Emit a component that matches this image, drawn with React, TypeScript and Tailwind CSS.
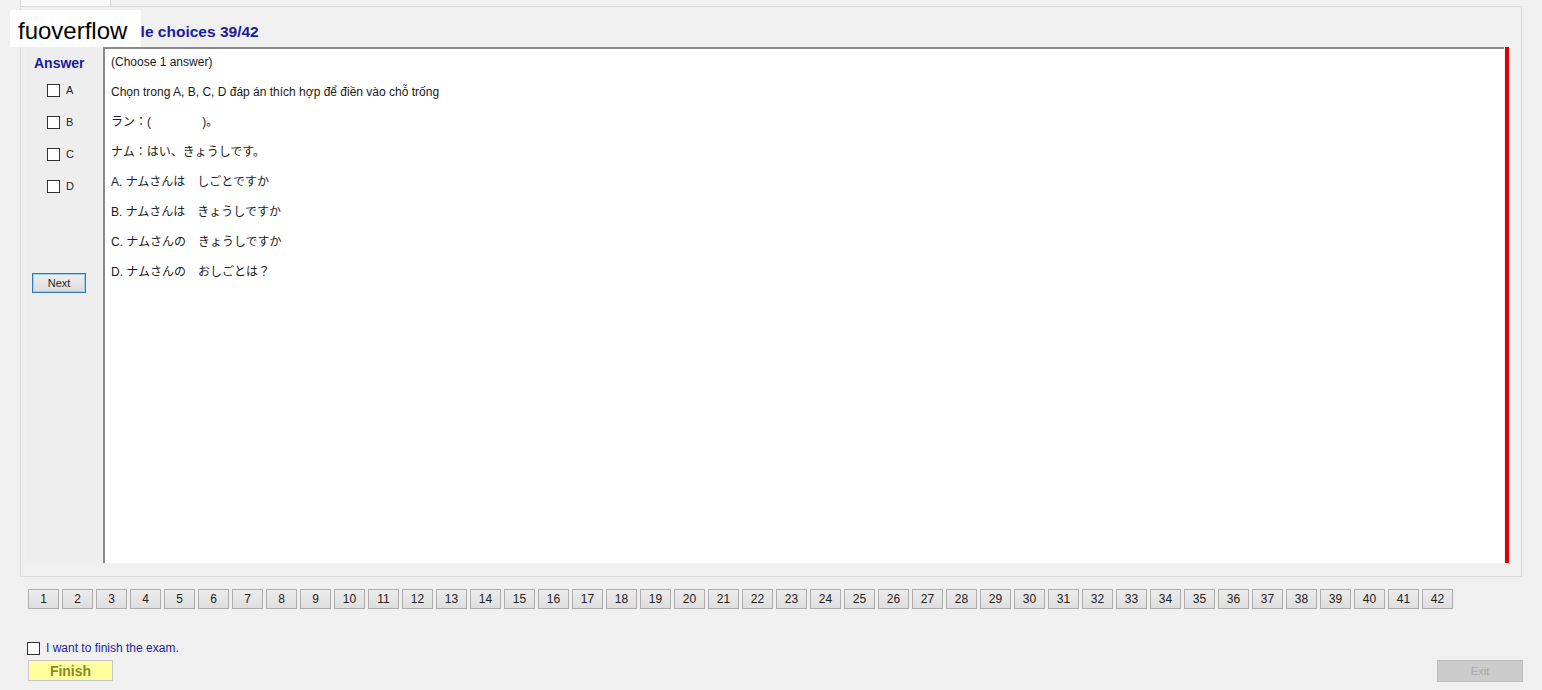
import React from "react";

const nums = Array.from({ length: 42 }, (_, i) => i + 1);

function Box() {
  return <span className="inline-block w-[13px] h-[13px] bg-white border border-[#333333]" />;
}

export default function App() {
  const lines = [
    "(Choose 1 answer)",
    "Chọn trong A, B, C, D đáp án thích hợp để điền vào chỗ trống",
    "ラン：(　　　　 )。",
    "ナム：はい、きょうしです。",
    "A. ナムさんは　しごとですか",
    "B. ナムさんは　きょうしですか",
    "C. ナムさんの　きょうしですか",
    "D. ナムさんの　おしごとは？",
  ];
  return (
    <div
      className="relative w-[1542px] h-[690px] bg-[#f0f0f0] overflow-hidden text-black"
      style={{ fontFamily: '"Liberation Sans", Arial, "Noto Sans CJK JP", sans-serif' }}
    >
      {/* tab strip */}
      <div className="h-[6px] flex">
        <div className="ml-[20px] w-[91px] h-[6px] bg-[#fafafa] border-l border-r border-[#d9d9d9]" />
      </div>
      {/* panel */}
      <div className="ml-[20px] w-[1502px] h-[571px] border border-[#dcdcdc] bg-[#f0f0f0] flex flex-col">
        <div className="h-[40px] flex items-end pb-[8px] pl-[74px]">
          <span className="text-[15.5px] font-bold text-[#1b1b9e] leading-none">Multiple choices 39/42</span>
        </div>
        <div className="flex h-[516px] pl-[4px]">
          <div className="w-[78px] bg-[#eeeeee] flex flex-col items-start">
            <div className="mt-[9px] ml-[9px] text-[14px] font-bold text-[#1b1b9e] leading-none">Answer</div>
            <div className="mt-[14px] ml-[22px] flex flex-col gap-[19px]">
              {["A", "B", "C", "D"].map((l) => (
                <div key={l} className="flex items-center gap-[6px] h-[13px] text-[11px] text-[#222222]">
                  <Box />
                  <span>{l}</span>
                </div>
              ))}
            </div>
            <button className="mt-[80px] ml-[7px] w-[54px] h-[20px] border border-[#2e7ab8] bg-gradient-to-b from-[#efefef] to-[#dcdcdc] text-[11px] text-[#222222] leading-none shadow-[inset_0_0_0_1px_#9fd0f0]">
              Next
            </button>
          </div>
          <div className="w-[1401px] bg-white border-t-2 border-l-2 border-[#8a8a8a] pl-[6px] pt-[5px]">
            {lines.map((t, i) => (
              <div key={i} className="h-[30px] text-[12px] leading-[17px] text-[#1a1a1a] whitespace-pre">
                {t}
              </div>
            ))}
          </div>
          <div className="ml-[1px] w-[4px] bg-[#e00000]" />
        </div>
      </div>
      {/* number buttons */}
      <div className="mt-[12px] ml-[28px] flex gap-[3px]">
        {nums.map((n) => (
          <div
            key={n}
            className="w-[31px] h-[20px] border border-[#adadad] bg-gradient-to-b from-[#ececec] to-[#dedede] flex items-center justify-center text-[12px] text-[#222222]"
          >
            {n}
          </div>
        ))}
      </div>
      {/* finish area */}
      <div className="mt-[32px] ml-[27px] flex items-center gap-[6px] h-[14px]">
        <Box />
        <span className="text-[12px] text-[#23239a] leading-none">I want to finish the exam.</span>
      </div>
      <div className="mt-[5px] flex justify-between items-start pl-[28px] pr-[19px]">
        <div className="w-[85px] h-[21px] bg-[#ffffa0] border border-[#c8c8c8] flex items-center justify-center text-[14px] font-bold text-[#8a8a1e] leading-none">
          Finish
        </div>
        <div className="w-[86px] h-[22px] bg-[#cccccc] border border-[#bdbdbd] flex items-center justify-center text-[11px] text-[#a8a8a8] leading-none">
          Exit
        </div>
      </div>
      {/* overlay label */}
      <div className="absolute left-[10px] top-[10px] w-[131px] h-[37px] bg-white flex items-center pl-[8px] pt-[5px]">
        <span className="text-[24px] leading-none text-black" style={{ fontFamily: '"Liberation Sans", Arial, sans-serif' }}>
          fuoverflow
        </span>
      </div>
    </div>
  );
}
